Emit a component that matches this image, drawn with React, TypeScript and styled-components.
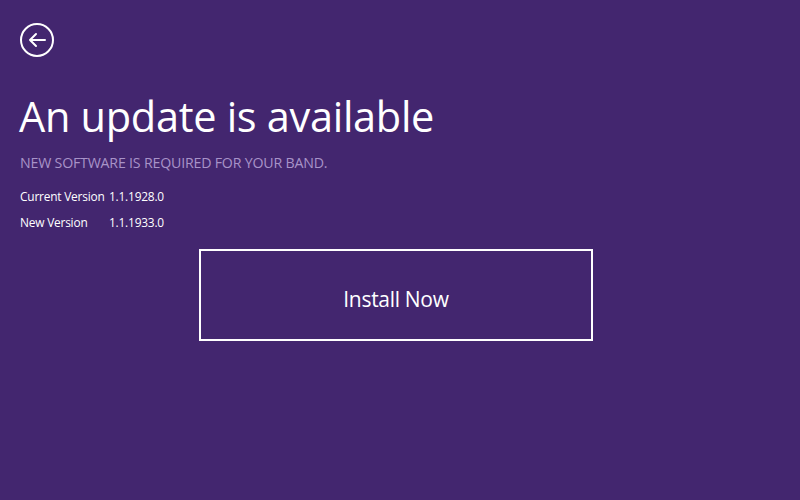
import { createGlobalStyle, styled } from "styled-components";

const GlobalStyle = createGlobalStyle`
  html, body {
    margin: 0;
    padding: 0;
    background: #43266f;
  }
  body {
    font-family: "Open Sans", "Noto Sans", sans-serif;
    color: #ffffff;
  }
`;

const Page = styled.div`
  width: 800px;
  height: 500px;
  box-sizing: border-box;
  padding: 22px 20px 0 19px;
  background: #43266f;
  display: flex;
  flex-direction: column;
`;

const BackButton = styled.button`
  width: 36px;
  height: 36px;
  padding: 0;
  border: 0;
  background: transparent;
  cursor: pointer;
  display: flex;
  align-items: center;
  justify-content: center;
`;

const Title = styled.h1`
  margin: 28px 0 0 0;
  font-size: 41.5px;
  font-weight: 400;
  line-height: 60px;
  letter-spacing: -0.3px;
`;

const Subtitle = styled.p`
  margin: 7px 0 0 1px;
  font-size: 14.2px;
  line-height: 20px;
  color: #a893c8;
  letter-spacing: -0.2px;
`;

const VersionTable = styled.div`
  display: grid;
  grid-template-columns: 89px auto;
  row-gap: 6px;
  margin: 13px 0 0 1px;
  font-size: 11.9px;
  line-height: 20px;
  letter-spacing: -0.2px;
`;

const ButtonRow = styled.div`
  display: flex;
  margin: 17px 0 0 180px;
`;

const InstallButton = styled.button`
  width: 394px;
  height: 92px;
  box-sizing: border-box;
  border: 2px solid #ffffff;
  background: transparent;
  color: #ffffff;
  padding: 8px 0 0 0;
  font-family: "Open Sans", "Noto Sans", sans-serif;
  font-size: 21px;
  letter-spacing: -0.3px;
  cursor: pointer;
`;

export default function App() {
  return (
    <>
      <GlobalStyle />
      <Page>
        <BackButton aria-label="Back">
          <svg width="36" height="36" viewBox="0 0 36 36" fill="none">
            <circle cx="18" cy="18" r="16" stroke="#fff" strokeWidth="2" />
            <path d="M26 18H11M17 12l-6 6 6 6" stroke="#fff" strokeWidth="2" strokeLinecap="round" strokeLinejoin="round" />
          </svg>
        </BackButton>
        <Title>An update is available</Title>
        <Subtitle>NEW SOFTWARE IS REQUIRED FOR YOUR BAND.</Subtitle>
        <VersionTable>
          <span>Current Version</span>
          <span>1.1.1928.0</span>
          <span>New Version</span>
          <span>1.1.1933.0</span>
        </VersionTable>
        <ButtonRow>
          <InstallButton>Install Now</InstallButton>
        </ButtonRow>
      </Page>
    </>
  );
}
